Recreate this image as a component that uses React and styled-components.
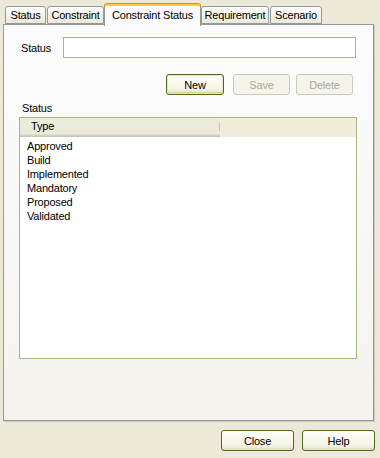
import styled, { createGlobalStyle } from "styled-components";

const GlobalStyle = createGlobalStyle`
  html, body {
    margin: 0;
    padding: 0;
    background: #ece9d8;
  }
  body {
    font-family: "Liberation Sans", Arial, sans-serif;
    font-size: 11px;
    letter-spacing: -0.2px;
    color: #000;
  }
`;

const Dialog = styled.div`
  width: 380px;
  height: 458px;
  background: #ece9d8;
  display: flex;
  flex-direction: column;
  overflow: hidden;
`;

const TabStrip = styled.div`
  display: flex;
  align-items: flex-end;
  height: 24px;
  padding-left: 5px;
  position: relative;
  z-index: 1;
`;

const Tab = styled.div`
  box-sizing: border-box;
  width: ${(p) => p.$w}px;
  margin-right: ${(p) => p.$mr || 0}px;
  height: ${(p) => (p.$active ? 22 : 18)}px;
  margin-bottom: ${(p) => (p.$active ? -2 : 0)}px;
  border: 1px solid #919b9c;
  border-bottom: ${(p) => (p.$active ? "none" : "1px solid #919b9c")};
  border-radius: 3px 3px 0 0;
  background: ${(p) =>
    p.$active ? "#fcfcfe" : "linear-gradient(#ffffff, #f3f0e3 60%, #ece9d8)"};
  border-top: ${(p) => (p.$active ? "2px solid #ffc83c" : "1px solid #919b9c")};
  box-shadow: ${(p) => (p.$active ? "0 -1px 0 #e68b2c" : "none")};
  display: flex;
  align-items: center;
  justify-content: center;
  padding-bottom: ${(p) => (p.$active ? 2 : 0)}px;
  font-size: 11px;
  white-space: nowrap;
`;

const Panel = styled.div`
  box-sizing: border-box;
  margin-left: 3px;
  width: 371px;
  height: 397px;
  border: 1px solid #919b9c;
  border-right-color: #8b9596;
  box-shadow: 1px 1px 0 #d0cdbd;
  background: linear-gradient(#fcfcfe, #f4f3ee);
  display: flex;
  flex-direction: column;
  padding: 12px 17px 0 17px;
`;

const FieldRow = styled.div`
  display: flex;
  align-items: center;
  height: 21px;
`;

const Label = styled.span`
  width: 42px;
  line-height: 14px;
`;

const TextInput = styled.div`
  box-sizing: border-box;
  flex: 1;
  height: 21px;
  background: #fff;
  border: 1px solid #a5b97f;
`;

const ButtonRow = styled.div`
  display: flex;
  justify-content: flex-end;
  padding-right: 3px;
  margin-top: 16px;
`;

const Button = styled.div`
  box-sizing: border-box;
  width: ${(p) => p.$w || 58}px;
  height: 21px;
  margin-left: ${(p) => p.$ml || 0}px;
  border-radius: 3px;
  display: flex;
  align-items: center;
  justify-content: center;
  font-size: 11px;
  border: 1px solid ${(p) => (p.$disabled ? "#cac8bb" : "#4b6c1c")};
  color: ${(p) => (p.$disabled ? "#aca899" : "#000")};
  background: ${(p) =>
    p.$disabled ? "#f5f4ea" : "linear-gradient(#fffffb, #f5f4e6 70%, #e6e3cf)"};
  box-shadow: ${(p) =>
    p.$default
      ? "inset 0 0 0 1px #e9e6c5, inset 0 -1px 0 1px #d6d09c"
      : p.$disabled
      ? "none"
      : "inset 0 -2px 0 #e2dfcc"};
`;

const SectionLabel = styled.div`
  margin-top: 6px;
  padding-left: 1px;
  height: 16px;
  line-height: 14px;
`;

const ListBox = styled.div`
  box-sizing: border-box;
  width: 338px;
  height: 242px;
  margin-left: -2px;
  background: #fff;
  border: 1px solid #a5b97f;
  display: flex;
  flex-direction: column;
`;

const ListHeader = styled.div`
  display: flex;
  height: 19px;
  background: #ebeadb;
  box-shadow: inset 0 -1px 0 #cbc7b8, inset 0 -2px 0 #d6d2c2, inset 0 -3px 0 #e2decd;
`;

const HeaderCell = styled.div`
  box-sizing: border-box;
  width: ${(p) => (p.$w ? `${p.$w}px` : "auto")};
  flex: ${(p) => (p.$w ? "none" : 1)};
  padding: 0 0 3px 11px;
  display: flex;
  align-items: center;
  background: ${(p) => (p.$fill ? "#f1ecdc" : "transparent")};
`;

const HeaderDivider = styled.div`
  width: 1px;
  margin: 4px 0 6px;
  background: #c7c5b2;
  box-shadow: 1px 0 0 #fff;
`;

const Items = styled.div`
  padding: 2px 0 0 7px;
  display: flex;
  flex-direction: column;
`;

const Item = styled.div`
  height: 14px;
  line-height: 14px;
`;

const Footer = styled.div`
  display: flex;
  justify-content: flex-end;
  gap: 8px;
  padding: 9px 5px 0 0;
`;

const tabs = [
  { label: "Status", w: 41, mr: 1 },
  { label: "Constraint", w: 57 },
  { label: "Constraint Status", w: 97, active: true },
  { label: "Requirement", w: 68, mr: 1 },
  { label: "Scenario", w: 52 },
];

const statuses = [
  "Approved",
  "Build",
  "Implemented",
  "Mandatory",
  "Proposed",
  "Validated",
];

export default function App() {
  return (
    <>
      <GlobalStyle />
      <Dialog>
        <TabStrip>
          {tabs.map((t) => (
            <Tab key={t.label} $w={t.w} $mr={t.mr} $active={t.active}>
              {t.label}
            </Tab>
          ))}
        </TabStrip>
        <Panel>
          <FieldRow>
            <Label>Status</Label>
            <TextInput />
          </FieldRow>
          <ButtonRow>
            <Button $default>New</Button>
            <Button $disabled $ml={9} $w={57}>
              Save
            </Button>
            <Button $disabled $ml={6} $w={57}>
              Delete
            </Button>
          </ButtonRow>
          <SectionLabel>Status</SectionLabel>
          <ListBox>
            <ListHeader>
              <HeaderCell $w={199}>Type</HeaderCell>
              <HeaderDivider />
              <HeaderCell $fill />
            </ListHeader>
            <Items>
              {statuses.map((s) => (
                <Item key={s}>{s}</Item>
              ))}
            </Items>
          </ListBox>
        </Panel>
        <Footer>
          <Button $w={73}>Close</Button>
          <Button $w={73}>Help</Button>
        </Footer>
      </Dialog>
    </>
  );
}
